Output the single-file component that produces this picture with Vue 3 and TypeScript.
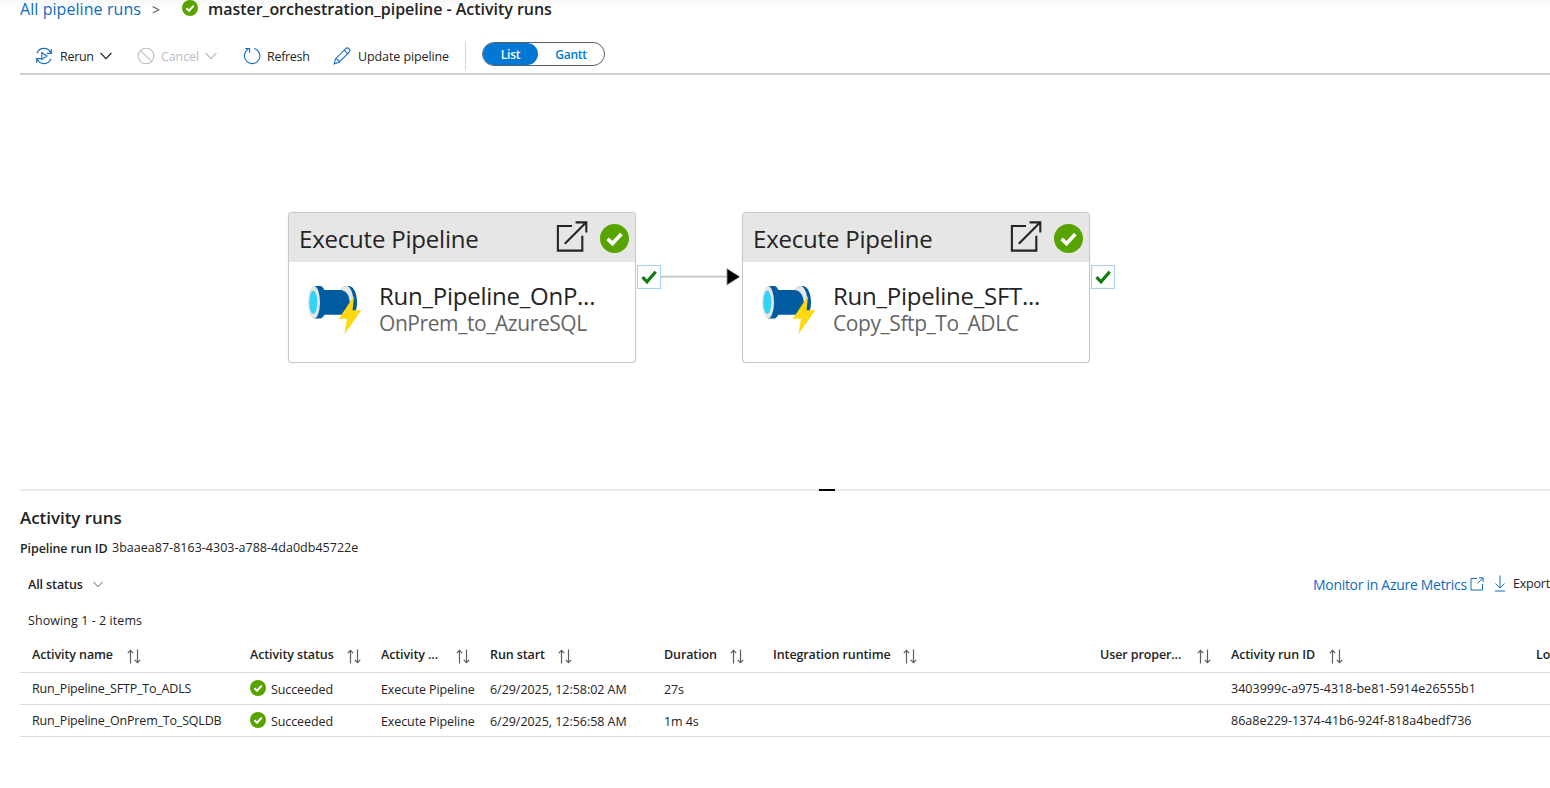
<script setup lang="ts">
interface Column {
  key: string
  label: string
  labelWidth: number
  sortable: boolean
}

interface ActivityRun {
  name: string
  status: string
  type: string
  start: string
  duration: string
  runId: string
}

interface PipelineNode {
  id: string
  title: string
  pipeline: string
}

const nodes: PipelineNode[] = [
  { id: 'first', title: 'Run_Pipeline_OnP...', pipeline: 'OnPrem_to_AzureSQL' },
  { id: 'second', title: 'Run_Pipeline_SFT...', pipeline: 'Copy_Sftp_To_ADLC' },
]

const columns: Column[] = [
  { key: 'name', label: 'Activity name', labelWidth: 95, sortable: true },
  { key: 'status', label: 'Activity status', labelWidth: 97, sortable: true },
  { key: 'type', label: 'Activity ...', labelWidth: 75, sortable: true },
  { key: 'start', label: 'Run start', labelWidth: 68, sortable: true },
  { key: 'duration', label: 'Duration', labelWidth: 66, sortable: true },
  { key: 'runtime', label: 'Integration runtime', labelWidth: 130, sortable: true },
  { key: 'props', label: 'User proper...', labelWidth: 97, sortable: true },
  { key: 'runId', label: 'Activity run ID', labelWidth: 98, sortable: true },
  { key: 'log', label: 'Lo', labelWidth: 18, sortable: false },
]

const runs: ActivityRun[] = [
  {
    name: 'Run_Pipeline_SFTP_To_ADLS',
    status: 'Succeeded',
    type: 'Execute Pipeline',
    start: '6/29/2025, 12:58:02 AM',
    duration: '27s',
    runId: '3403999c-a975-4318-be81-5914e26555b1',
  },
  {
    name: 'Run_Pipeline_OnPrem_To_SQLDB',
    status: 'Succeeded',
    type: 'Execute Pipeline',
    start: '6/29/2025, 12:56:58 AM',
    duration: '1m 4s',
    runId: '86a8e229-1374-41b6-924f-818a4bedf736',
  },
]
</script>

<template>
  <main class="page">
    <header class="crumbs">
      <a class="crumb-link">All pipeline runs</a>
      <span class="crumb-sep">&gt;</span>
      <svg class="ok" viewBox="0 0 16 16"><circle cx="8" cy="8" r="8" /><path d="M4.4 8.2 7 10.7 11.7 5.6" /></svg>
      <h1 class="crumb-title">master_orchestration_pipeline - Activity runs</h1>
    </header>

    <nav class="toolbar">
      <button class="tool rerun">
        <svg class="tool-icon" viewBox="0 0 18 18">
          <path d="M2 6.3A7.4 7.4 0 0 1 15.8 6M16.3 2v4.4h-4.4M16 11.7A7.4 7.4 0 0 1 2.2 12M1.7 16v-4.4h4.4M6.8 5.6v6.8L12 9z" />
        </svg>
        <span class="tool-label">Rerun</span>
        <svg class="chevron" viewBox="0 0 12 8"><path d="M.6 1 6 6.6 11.4 1" /></svg>
      </button>
      <button class="tool cancel">
        <svg class="tool-icon" viewBox="0 0 18 18"><circle cx="9" cy="9" r="7.8" /><path d="M3.6 3.6 14.4 14.4" /></svg>
        <span class="tool-label">Cancel</span>
        <svg class="chevron" viewBox="0 0 12 8"><path d="M.6 1 6 6.6 11.4 1" /></svg>
      </button>
      <button class="tool refresh">
        <svg class="tool-icon" viewBox="0 0 18 18"><path d="M11.2 1.5A7.7 7.7 0 1 1 5 2.4M2.2 1.6H6.6V6" /></svg>
        <span class="tool-label">Refresh</span>
      </button>
      <button class="tool update">
        <svg class="tool-icon" viewBox="0 0 18 18">
          <path d="M1.2 16.8 2.6 11.7 12.5 1.8a2.4 2.4 0 0 1 3.5 3.5L6.2 15.2zM11.2 3.2l3.5 3.5M2.6 11.7c1.8.2 3.2 1.5 3.6 3.5" />
        </svg>
        <span class="tool-label">Update pipeline</span>
      </button>
      <span class="divider"></span>
      <div class="switch">
        <span class="switch-item active">List</span>
        <span class="switch-item">Gantt</span>
      </div>
    </nav>

    <section class="canvas">
      <template v-for="(node, index) in nodes" :key="node.id">
        <svg v-if="index > 0" class="link" viewBox="0 0 81 20">
          <path class="link-line" d="M0 9.6H66" />
          <path class="link-head" d="M65.800 1.3 79.200 9.8 65.800 18.3z" />
        </svg>
        <article class="node">
          <div class="node-head">
            <span class="node-kind">Execute Pipeline</span>
            <svg class="open" viewBox="0 0 32 32">
              <path d="M16 5H1.9V29.6H26.3V14.8M8.8 22.7 30 1.6M19.6 1.4H30.3V11.6" />
            </svg>
            <svg class="ok node-ok" viewBox="0 0 16 16"><circle cx="8" cy="8" r="8" /><path d="M4.2 8.2 6.9 10.8 11.8 5.5" /></svg>
          </div>
          <div class="node-body">
            <svg class="pipe" viewBox="0 0 54 50">
              <path d="M6 1h7c1.500.8 2.600 2.200 3.400 4H33c1-2.200 3.500-4 6.500-4h2c4.600 1 7.500 8 7.500 16.300S46 32.500 41.500 33.600h-3c-2-.8-3.500-2-4.500-3.800H16.400c-.8 1.800-2 3-3.400 3.800H6z" fill="#005ba1" />
              <ellipse cx="6" cy="17.300" rx="6" ry="16.300" fill="#e6e6e6" />
              <ellipse cx="5.300" cy="17.300" rx="4" ry="11.800" fill="#32d4f5" />
              <path d="M33 5C34 2.500 37 1 39.500 1c3.800 2.200 5.800 8 5.800 15.300l-3.300 4.500C42 13 40 6 33 5z" fill="#e6e6e6" />
              <path d="M46 11 30.800 33.800H39L36.500 49.300 53.300 25.300H44.600z" fill="#ffd80f" />
            </svg>
            <div class="node-text">
              <span class="node-title">{{ node.title }}</span>
              <span class="node-sub">{{ node.pipeline }}</span>
            </div>
          </div>
        </article>
        <span class="port">
          <svg viewBox="0 0 16 14"><path d="M1.500 7.200 6 11.800 14.700 1.800" /></svg>
        </span>
      </template>
    </section>

    <div class="splitter"><span class="grip"></span></div>

    <section class="runs">
      <h2 class="heading">Activity runs</h2>
      <p class="run-id">
        <span class="run-id-label">Pipeline run ID</span>
        <span class="guid">3baaea87-8163-4303-a788-4da0db45722e</span>
      </p>
      <div class="filters">
        <span class="status-filter">All status</span>
        <svg class="chevron small" viewBox="0 0 12 8"><path d="M.6 1 6 6.600 11.400 1" /></svg>
        <a class="metrics">Monitor in Azure Metrics</a>
        <svg class="metrics-icon" viewBox="0 0 14 14"><path d="M7 1.500H1V13H12.500V7M7.600 6.400 12.800 1M9 .8H13.100V5" /></svg>
        <svg class="export-icon" viewBox="0 0 12 17"><path d="M6 .5V13M1.500 8.600 6 13l4.500-4.400M1 16H11" /></svg>
        <span class="export">Export</span>
      </div>
      <p class="count">Showing 1 - 2 items</p>

      <div class="row head">
        <div v-for="col in columns" :key="col.key" class="cell">
          <span class="col-label" :style="{ width: col.labelWidth + 'px' }">{{ col.label }}</span>
          <svg v-if="col.sortable" class="sort" viewBox="0 0 14 15">
            <path d="M3.500 14.500V1.500M.8 4.200 3.500 1.300 6.200 4.200M10.500 .5V13.500M7.800 10.800 10.500 13.700 13.200 10.800" />
          </svg>
        </div>
      </div>
      <div v-for="run in runs" :key="run.runId" class="row">
        <div class="cell raised name">{{ run.name }}</div>
        <div class="cell status">
          <svg class="ok" viewBox="0 0 16 16"><circle cx="8" cy="8" r="8" /><path d="M4.400 8.200 7 10.700 11.700 5.600" /></svg>
          <span>{{ run.status }}</span>
        </div>
        <div class="cell">{{ run.type }}</div>
        <div class="cell start">{{ run.start }}</div>
        <div class="cell">{{ run.duration }}</div>
        <div class="cell"></div>
        <div class="cell"></div>
        <div class="cell raised guid">{{ run.runId }}</div>
        <div class="cell"></div>
      </div>
    </section>
  </main>
</template>

<style>
html,
body {
  overflow: hidden;
  background: #fff;
}
</style>

<style scoped>
.page {
  width: 1550px;
  height: 788px;
  overflow: hidden;
  box-sizing: border-box;
  padding-left: 20px;
  background: linear-gradient(#f8f8f8, #fff 12px);
  color: #242424;
  font-family: "Open Sans", "Noto Sans", sans-serif;
  font-size: 12.5px;
  letter-spacing: -0.1px;
  white-space: nowrap;
}

h1,
h2,
p {
  margin: 0;
  font: inherit;
}

svg {
  display: block;
  flex: none;
  fill: none;
}

.ok {
  width: 16px;
  height: 16px;
}

.ok circle {
  fill: #57a300;
}

.ok path {
  stroke: #fff;
  stroke-width: 2;
}

.crumbs {
  display: flex;
  height: 38px;
  line-height: 18px;
  font-size: 16px;
}

.crumb-link {
  width: 132px;
  color: #0f6cbd;
  letter-spacing: 0.07px;
}

.crumb-sep {
  width: 30px;
  padding-top: 1px;
  color: #555;
  font-size: 14px;
}

.crumb-title {
  margin-left: 10px;
  font-weight: 600;
  letter-spacing: -0.03px;
}

.toolbar {
  display: flex;
  align-items: center;
  height: 35px;
  border-bottom: 2px solid #d0d0d0;
}

.tool {
  display: flex;
  flex: none;
  align-items: center;
  padding: 0;
  border: 0;
  background: none;
  color: inherit;
  font: inherit;
  letter-spacing: -0.3px;
}

.tool-icon {
  width: 18px;
  height: 18px;
  margin-right: 7px;
  stroke: #1570c4;
  stroke-width: 1.1;
}

.tool-label {
  padding-top: 2px;
  text-align: left;
}

.rerun {
  width: 117px;
  padding-left: 15px;
}

.rerun .tool-label {
  width: 40px;
}

.cancel {
  width: 106px;
  color: #bdbdbd;
  letter-spacing: -0.1px;
}

.cancel .tool-icon {
  margin-right: 6px;
  stroke: #bdbdbd;
}

.cancel .tool-label {
  width: 44px;
}

.refresh {
  width: 90px;
}

.refresh .tool-icon {
  margin-right: 6px;
}

.update {
  width: 132px;
  letter-spacing: -0.1px;
}

.chevron {
  width: 12px;
  height: 8px;
  stroke: currentColor;
  stroke-width: 1.2;
}

.divider {
  width: 1px;
  height: 29px;
  background: #d6d6d6;
}

.switch {
  display: flex;
  box-sizing: border-box;
  width: 123px;
  height: 24px;
  margin: 0 0 3px 16px;
  border: 1px solid #605e5c;
  border-radius: 12px;
  font-size: 12px;
  font-weight: 600;
  line-height: 24px;
  letter-spacing: -0.3px;
  color: #0078d4;
  text-align: center;
}

.switch-item {
  flex: 1;
}

.switch-item.active {
  flex: none;
  width: 55px;
  height: 22px;
  border-radius: 11px;
  background: #0078d4;
  color: #fff;
}

.canvas {
  display: flex;
  align-items: flex-start;
  height: 277px;
  padding: 137px 0 0 268px;
}

.node {
  box-sizing: border-box;
  width: 348px;
  height: 151px;
  border: 1px solid #c8c8c8;
  border-radius: 4px;
  overflow: hidden;
  background: #fff;
  box-shadow: 0 0 1px #ccc;
}

.node-head {
  display: flex;
  align-items: center;
  height: 49px;
  padding-left: 10px;
  background: #e6e6e6;
}

.node-kind {
  width: 257px;
  padding-top: 1px;
  font-size: 24px;
  letter-spacing: -0.2px;
}

.open {
  width: 32px;
  height: 32px;
  margin-bottom: 2px;
  stroke: #242424;
  stroke-width: 2.1;
}

.node-ok {
  width: 29px;
  height: 29px;
  margin: 2px 0 0 12px;
}

.node-body {
  display: flex;
  padding: 23px 0 0 19px;
}

.pipe {
  width: 54px;
  height: 50px;
}

.node-text {
  display: flex;
  flex-direction: column;
  padding-left: 17px;
}

.node-title {
  height: 28px;
  margin-top: -2px;
  font-size: 24px;
  line-height: 25px;
  letter-spacing: -0.25px;
}

.node-sub {
  color: #666;
  font-size: 21px;
  line-height: 24px;
  letter-spacing: -0.42px;
}

.port {
  display: flex;
  align-items: center;
  justify-content: center;
  box-sizing: border-box;
  width: 24px;
  height: 24px;
  margin: 53px 0 0 1px;
  border: 1px solid #a9d3f5;
  background: #fff;
  box-shadow: inset 0 0 1px #a9d3f5;
}

.port svg {
  width: 16px;
  height: 14px;
  stroke: #107c10;
  stroke-width: 3.2;
}

.link {
  width: 81px;
  height: 20px;
  margin-top: 55px;
}

.link-line {
  stroke: #c4c4c4;
  stroke-width: 1.6;
}

.link-head {
  fill: #000;
  stroke: #ccc;
  stroke-width: 1;
}

.splitter {
  height: 2px;
  background: #ebebeb;
}

.grip {
  display: block;
  width: 16px;
  height: 2px;
  margin-left: 799px;
  background: #000;
}

.heading {
  padding-top: 15px;
  font-size: 17px;
  font-weight: 600;
  line-height: 24px;
  letter-spacing: -0.05px;
}

.run-id {
  display: flex;
  padding-top: 9px;
  line-height: 18px;
}

.run-id-label {
  width: 92px;
  padding-top: 1px;
  font-weight: 600;
}

.guid {
  letter-spacing: 0.02px;
}

.filters {
  display: flex;
  align-items: center;
  height: 36px;
  padding: 8px 0 0 8px;
}

.status-filter {
  flex: none;
  width: 65px;
  font-weight: 600;
}

.chevron.small {
  width: 10px;
  height: 7px;
  stroke: #605e5c;
}

.metrics {
  flex: none;
  width: 157px;
  margin-left: 1210px;
  color: #0f6cbd;
  font-size: 14px;
  letter-spacing: -0.3px;
}

.metrics-icon {
  width: 14px;
  height: 14px;
  stroke: #0f6cbd;
}

.export-icon {
  width: 12px;
  height: 17px;
  margin: 0 7px 2px 10px;
  stroke: #0f6cbd;
}

.export {
  flex: none;
  padding-bottom: 2px;
  letter-spacing: -0.2px;
}

.count {
  padding: 10px 0 0 8px;
  line-height: 18px;
  letter-spacing: 0.07px;
}

.row {
  display: grid;
  grid-template-columns: 218px 131px 109px 174px 109px 327px 131px 305px 26px;
  height: 31px;
  padding-left: 12px;
  border-bottom: 1px solid #dcdcdc;
  line-height: 34px;
}

.row.head {
  height: 34px;
  margin-top: 8px;
  font-weight: 600;
}

.cell {
  display: flex;
}

.raised {
  line-height: 32px;
}

.name {
  letter-spacing: -0.18px;
}

.start {
  letter-spacing: -0.04px;
}

.status .ok {
  margin: 7px 5px 0 0;
}

.sort {
  width: 14px;
  height: 15px;
  margin-top: 11px;
  stroke: #605e5c;
  stroke-width: 1.2;
}
</style>
